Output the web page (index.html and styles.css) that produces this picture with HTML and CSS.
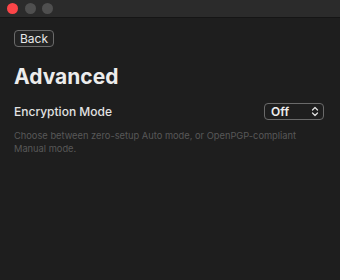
FILE: index.html
```html
<!DOCTYPE html>
<html>
<head>
<meta charset="utf-8">
<link rel="stylesheet" href="styles.css">
</head>
<body>
<div class="titlebar">
  <span class="dot red"></span>
  <span class="dot"></span>
  <span class="dot"></span>
</div>
<div class="content">
  <button class="back">Back</button>
  <h1 class="title">Advanced</h1>
  <div class="row">
    <span class="label">Encryption Mode</span>
    <div class="select">
      <span class="value">Off</span>
      <svg class="chev" width="8" height="11" viewBox="0 0 8 11"><path d="M1.5 4 L4 1.5 L6.5 4 M1.5 7 L4 9.5 L6.5 7" fill="none" stroke="#ddd" stroke-width="1.3" stroke-linecap="round" stroke-linejoin="round"/></svg>
    </div>
  </div>
  <p class="desc">Choose between zero-setup Auto mode, or OpenPGP-compliant Manual mode.</p>
</div>
</body>
</html>
```
FILE: styles.css
```css
html, body {
  margin: 0;
  padding: 0;
  height: 100%;
}
body {
  background: #1e1e1e;
  font-family: Inter, "Liberation Sans", sans-serif;
  color: #e6e6e6;
}
.titlebar {
  height: 17px;
  background: #2b2b2b;
  border-bottom: 1px solid #151515;
  display: flex;
  align-items: center;
  padding-left: 7px;
  gap: 6.5px;
}
.dot {
  width: 11px;
  height: 11px;
  border-radius: 50%;
  background: #4f4f4f;
}
.dot.red {
  background: #fc4548;
}
.content {
  padding: 12px 14px 0 14px;
}
.back {
  display: block;
  height: 17px;
  padding: 0 5px;
  background: #232323;
  border: 1px solid #6a6a6a;
  border-radius: 4px;
  color: #e8e8e8;
  font-family: inherit;
  font-size: 12px;
  line-height: 15px;
}
.title {
  margin: 17px 0 0 0;
  font-size: 21px;
  font-weight: 700;
  line-height: 26px;
  color: #ececec;
}
.row {
  margin-top: 13px;
  display: flex;
  justify-content: space-between;
  align-items: center;
  padding-right: 2px;
}
.label {
  font-size: 12px;
  font-weight: 500;
  color: #e2e2e2;
}
.select {
  width: 60px;
  height: 17px;
  box-sizing: border-box;
  border: 1px solid #6a6a6a;
  border-radius: 4px;
  display: flex;
  align-items: center;
  justify-content: space-between;
  padding: 0 4px 0 6px;
}
.value {
  font-size: 12px;
  font-weight: 600;
  color: #eee;
}
.desc {
  margin: 10px 0 0 0;
  font-size: 9.3px;
  line-height: 12.5px;
  color: #585858;
  width: 300px;
}
```
